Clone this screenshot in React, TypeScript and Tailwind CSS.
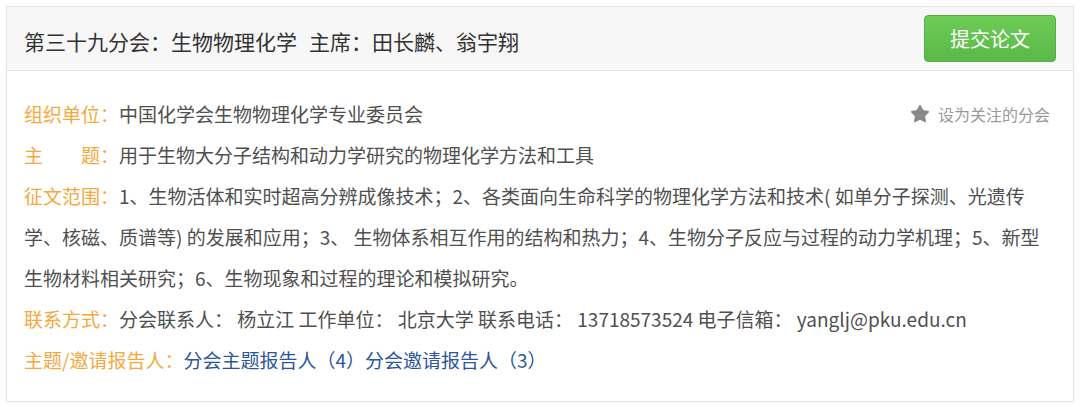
import { Star } from 'lucide-react';

const font = { fontFamily: '"Noto Sans CJK SC", "Noto Sans", sans-serif' };

function Row({ label, children }: { label: string; children: React.ReactNode }) {
  return (
    <div className="leading-[41px]">
      <span className="text-[#f5a83c]">{label}</span>
      {children}
    </div>
  );
}

export default function App() {
  return (
    <div className="bg-white p-[6px] h-[407px]" style={font}>
      <div className="border border-[#e4e4e4] h-[396px] bg-white">
        <div className="h-[64px] bg-[#f7f7f7] border-b border-[#e6e6e6] flex items-center justify-between pl-[17px] pr-[17px]">
          <h1 className="text-[21px] text-[#333] pt-[6px]">
            第三十九分会：生物物理化学<span className="ml-[12px]">主席：田长麟、翁宇翔</span>
          </h1>
          <button className="w-[132px] h-[47px] rounded-[4px] bg-gradient-to-b from-[#6dcc55] to-[#5bb849] border border-[#57b046] text-white text-[20px]">
            提交论文
          </button>
        </div>

        <div className="pl-[17px] pr-[23px] pt-[22px] text-[19px] text-[#4f4f4f]">
          <div className="float-right flex items-center gap-[8px] h-[41px] text-[16px] text-[#999]">
            <Star size={20} className="fill-[#888] text-[#888]" strokeWidth={1.5} strokeLinejoin="round" />
            <span>设为关注的分会</span>
          </div>
          <Row label="组织单位：">中国化学会生物物理化学专业委员会</Row>
          <Row label="主　　题：">用于生物大分子结构和动力学研究的物理化学方法和工具</Row>
          <div className="leading-[41px] whitespace-nowrap">
            <span className="text-[#f5a83c]">征文范围：</span>
            1、生物活体和实时超高分辨成像技术；2、各类面向生命科学的物理化学方法和技术( 如单分子探测、光遗传
            <br />
            学、核磁、质谱等) 的发展和应用；3、 生物体系相互作用的结构和热力；4、生物分子反应与过程的动力学机理；5、新型
            <br />
            生物材料相关研究；6、生物现象和过程的理论和模拟研究。
          </div>
          <Row label="联系方式：">
            分会联系人： 杨立江 工作单位： 北京大学 联系电话： 13718573524 电子信箱： yanglj@pku.edu.cn
          </Row>
          <Row label="主题/邀请报告人：">
            <a className="text-[#2c559c] cursor-pointer">分会主题报告人（4）</a>
            <a className="text-[#2c559c] cursor-pointer">分会邀请报告人（3）</a>
          </Row>
        </div>
      </div>
    </div>
  );
}
